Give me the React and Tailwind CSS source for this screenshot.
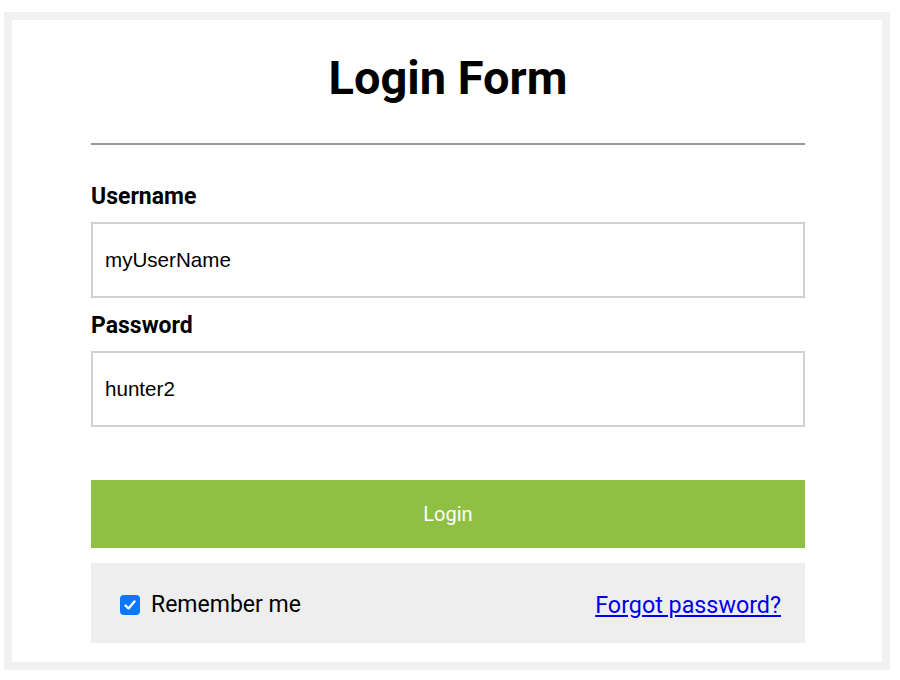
import React from 'react';

const Field = ({ label, value, last }) => (
    <div className={last ? '' : 'mb-[15px]'}>
        <label className="block text-[23px] leading-[26px] font-bold text-black mb-[12px]">{label}</label>
        <div className="h-[76px] border-2 border-[#d0d0d0] flex items-center pl-[12px] text-[20.6px] text-black font-['Liberation_Sans',Arial,sans-serif]">
            {value}
        </div>
    </div>
);

export default function App() {
    return (
        <div className="w-[900px] h-[680px] bg-white pt-3 pl-1 font-['Roboto',sans-serif]">
            <div className="w-[886px] h-[658px] border-8 border-[#f1f1f1] bg-white pl-[79px] pr-[77px] pt-[30px]">
                <h1 className="text-[47px] leading-[56px] font-bold text-center text-black">Login Form</h1>
                <hr className="mt-[37px] border-0 border-t-2 border-[#999]" />
                <form className="mt-[39px]">
                    <Field label="Username" value="myUserName" />
                    <Field label="Password" value="hunter2" last />
                    <button type="button" className="mt-[53px] w-full h-[68px] bg-[#8fbf43] text-white text-[20px]">Login</button>
                    <div className="mt-[15px] h-[80px] bg-[#eeeeee] flex items-center justify-between pl-[29px] pr-[24px] pt-[4px]">
                        <label className="flex items-center gap-[11px] text-[23px] text-black">
                            <span className="w-5 h-5 rounded-[4px] bg-[#0b76ff] flex items-center justify-center">
                                <svg width="14" height="14" viewBox="0 0 14 14" fill="none">
                                    <path d="M2.5 7.5l3 3 6-7" stroke="white" strokeWidth="2.4" strokeLinecap="round" strokeLinejoin="round" />
                                </svg>
                            </span>
                            Remember me
                        </label>
                        <a href="#" className="text-[23.3px] text-[#0000ee] underline">Forgot password?</a>
                    </div>
                </form>
            </div>
        </div>
    );
}
